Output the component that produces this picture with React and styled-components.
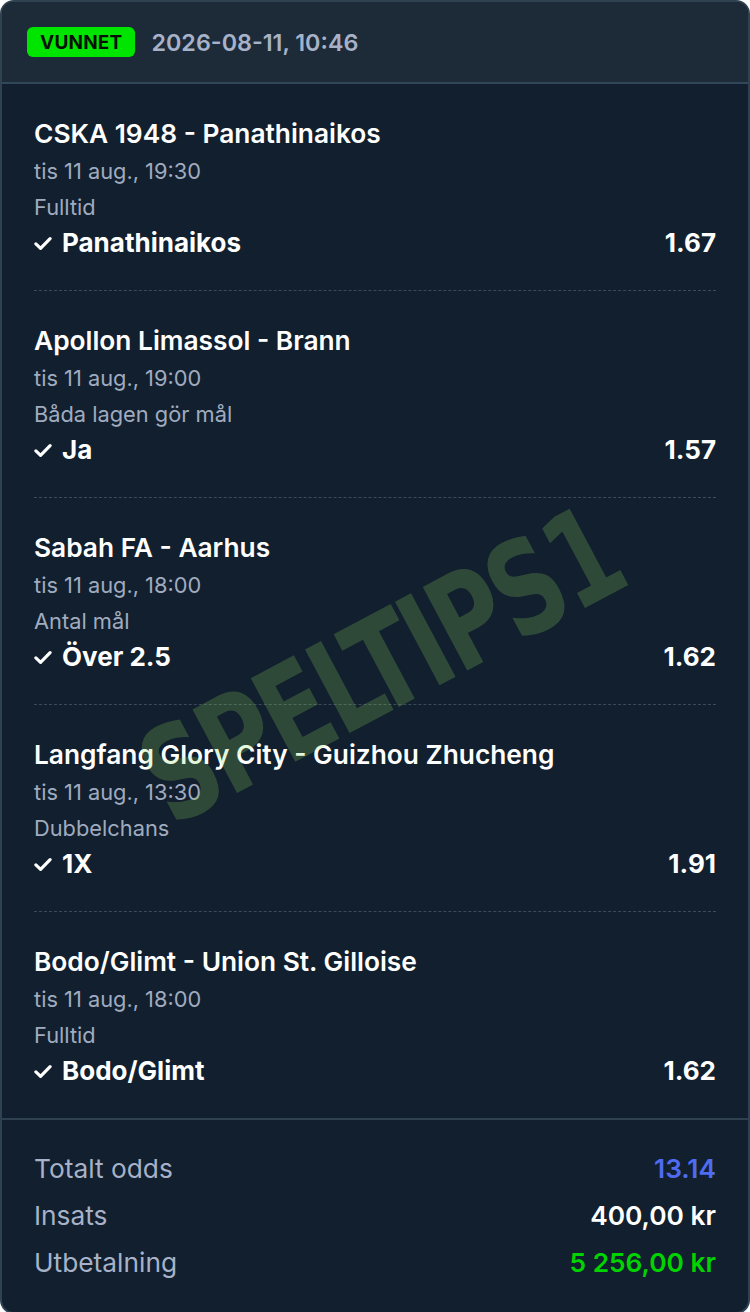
import React from "react";
import styled, { createGlobalStyle } from "styled-components";

const Global = createGlobalStyle`
  html, body { margin: 0; padding: 0; background: #ffffff; }
  body { font-family: Inter, "Noto Sans", sans-serif; -webkit-font-smoothing: antialiased; }
  * { box-sizing: border-box; }
`;

const Card = styled.div`
  position: relative;
  width: 750px;
  border: 2px solid #2f4252;
  border-radius: 14px;
  overflow: hidden;
  background: #111f2e;
`;

const Header = styled.div`
  height: 82px;
  display: flex;
  align-items: center;
  gap: 16px;
  padding: 0 25px;
  background: #1d2b38;
  border-bottom: 2px solid #32475a;
`;

const Badge = styled.span`
  display: inline-flex;
  align-items: center;
  height: 30px;
  padding: 0 13px;
  border-radius: 6px;
  background: #00e500;
  color: #071007;
  font-weight: 700;
  font-size: 19px;
  letter-spacing: 0.2px;
`;

const Stamp = styled.span`
  color: #a7b2c8;
  font-weight: 600;
  font-size: 23.3px;
`;

const Legs = styled.div`
  padding: 0 32px;
`;

const Leg = styled.div`
  padding: 35px 0 32px;
  border-bottom: ${(p) => (p.$last ? "none" : "1px dashed #3b4b5b")};
`;

const Title = styled.div`
  color: #ffffff;
  font-weight: 600;
  font-size: 26.3px;
  line-height: 30px;
`;

const Meta = styled.div`
  color: #a0abbf;
  font-weight: 400;
  font-size: 21.8px;
  line-height: 28px;
  margin-top: ${(p) => p.$mt}px;
`;

const Pick = styled.div`
  display: flex;
  align-items: center;
  justify-content: space-between;
  margin-top: 7px;
  line-height: 30px;
  color: #ffffff;
  font-weight: 700;
  font-size: 26px;
`;

const PickName = styled.span`
  display: inline-flex;
  align-items: center;
  gap: 10px;
`;

const Odds = styled.span`
  font-weight: 700;
  font-size: 26px;
`;

const Footer = styled.div`
  border-top: 2px solid #2f4150;
  padding: 34px 32px 34px;
  display: flex;
  flex-direction: column;
  gap: 17px;
`;

const Row = styled.div`
  display: flex;
  justify-content: space-between;
  align-items: center;
  line-height: 30px;
  font-size: 26.3px;
`;

const Label = styled.span`
  color: #a7b2c8;
  font-weight: 400;
`;

const Value = styled.span`
  color: ${(p) => p.$color};
  font-weight: 600;
`;

const Watermark = styled.div`
  position: absolute;
  left: 378px;
  top: 664px;
  transform: translate(-50%, -50%) rotate(-28deg);
  font-family: "DejaVu Sans", sans-serif;
  font-weight: 700;
  font-size: 130px;
  letter-spacing: -6px;
  color: rgba(147, 218, 94, 0.23);
  white-space: nowrap;
  pointer-events: none;
  line-height: 1;
`;

const WatermarkText = styled.span`
  display: inline-block;
  transform: scaleX(0.74);
`;

const Check = () => (
  <svg width="18" height="15" viewBox="0 0 17 14" fill="none">
    <path d="M1.8 7.4 L6.2 11.6 L15.2 2.4" stroke="#ffffff" strokeWidth="3" strokeLinecap="round" strokeLinejoin="round" />
  </svg>
);

const legs = [
  { match: "CSKA 1948 - Panathinaikos", time: "tis 11 aug., 19:30", market: "Fulltid", pick: "Panathinaikos", odds: "1.67" },
  { match: "Apollon Limassol - Brann", time: "tis 11 aug., 19:00", market: "Båda lagen gör mål", pick: "Ja", odds: "1.57" },
  { match: "Sabah FA - Aarhus", time: "tis 11 aug., 18:00", market: "Antal mål", pick: "Över 2.5", odds: "1.62" },
  { match: "Langfang Glory City - Guizhou Zhucheng", time: "tis 11 aug., 13:30", market: "Dubbelchans", pick: "1X", odds: "1.91" },
  { match: "Bodo/Glimt - Union St. Gilloise", time: "tis 11 aug., 18:00", market: "Fulltid", pick: "Bodo/Glimt", odds: "1.62" },
];

export default function App() {
  return (
    <>
      <Global />
      <Card>
        <Header>
          <Badge>VUNNET</Badge>
          <Stamp>2026-08-11, 10:46</Stamp>
        </Header>
        <Legs>
          {legs.map((l, i) => (
            <Leg key={i} $last={i === legs.length - 1}>
              <Title>{l.match}</Title>
              <Meta $mt={8}>{l.time}</Meta>
              <Meta $mt={8}>{l.market}</Meta>
              <Pick>
                <PickName>
                  <Check />
                  {l.pick}
                </PickName>
                <Odds>{l.odds}</Odds>
              </Pick>
            </Leg>
          ))}
        </Legs>
        <Footer>
          <Row>
            <Label>Totalt odds</Label>
            <Value $color="#4f6bf0">13.14</Value>
          </Row>
          <Row>
            <Label>Insats</Label>
            <Value $color="#ffffff">400,00 kr</Value>
          </Row>
          <Row>
            <Label>Utbetalning</Label>
            <Value $color="#00d400">5 256,00 kr</Value>
          </Row>
        </Footer>
        <Watermark>
          <WatermarkText>SPELTIPS1</WatermarkText>
        </Watermark>
      </Card>
    </>
  );
}
